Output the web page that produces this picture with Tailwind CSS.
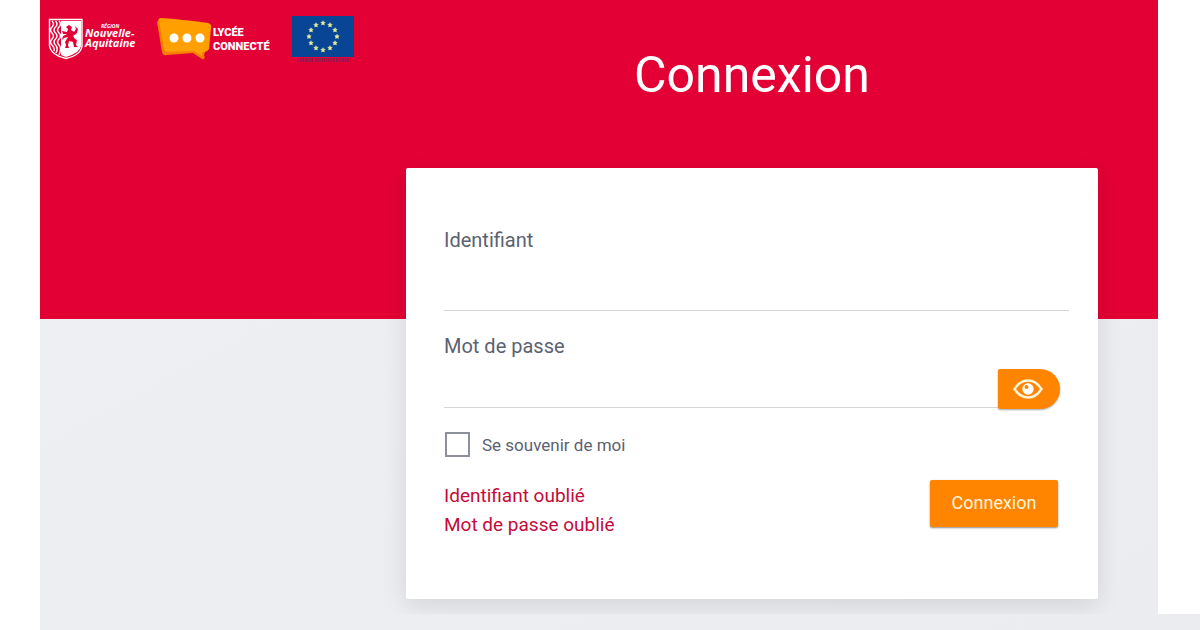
<!DOCTYPE html>
<html lang="fr">
<head>
<meta charset="utf-8">
<meta name="viewport" content="width=device-width, initial-scale=1">
<title>Connexion</title>
<script src="https://cdn.jsdelivr.net/npm/@tailwindcss/browser@4"></script>
</head>
<body class="flex min-h-screen flex-col bg-white pl-10 font-['Roboto',sans-serif] text-[#5b6270]">
  <div class="flex flex-1 flex-col bg-linear-to-br from-[#eef0f1] via-[#edeef2] to-[#ebecf0]">
    <div class="flex">
      <div class="flex flex-1 overflow-hidden bg-[linear-gradient(#e30035_319px,transparent_319px)] pr-15 pb-[15px]">
        <header class="flex w-[366px] shrink-0 items-start pt-[15px] pl-2">
          <svg class="mt-[2px] h-11 w-[90px]" viewBox="0 0 90 44" role="img" aria-label="Région Nouvelle-Aquitaine">
            <path d="M1.5 2.5H34V29Q33 38 18 41.500Q3 38 1.500 29Z" fill="#e30035" stroke="#fff" stroke-width="1.400"/>
            <path d="M13 4H33V29Q32 36 18 40Q15 39 13 38Z" fill="#fff"/>
            <path d="M4 4Q7 7 4 10T4 16T4 22T4 28T6 34M7.500 4Q10.500 7 7.500 10T7.500 16T7.500 22T7.500 28T8 36M11 4Q14 7 11 10T11 16T11 22T11 28T11 38" fill="none" stroke="#fff" stroke-width="1.500"/>
            <path d="M18 10L21 8L24 10L23 13L26 15L28 12L27 9L30 12L29 16L25 19L27 22L29 23L28 28L30 30H26L25 25L21 24L20 28L21 31H17L18 28L17 25L20 20L16 21L14 23L15 19L19 17L15 17L14 14L19 15L20 12Z" fill="#e30035"/>
            <g fill="#fff" font-family="Open Sans, sans-serif" font-weight="700" font-style="italic">
              <text x="53" y="11" font-size="5">RÉGION</text>
              <text x="37" y="20" font-size="11">Nouvelle-</text>
              <text x="37" y="30" font-size="11">Aquitaine</text>
            </g>
          </svg>
          <svg class="ml-[18px] h-12 w-[120px]" viewBox="0 0 120 48" role="img" aria-label="Lycée connecté">
            <path d="M5 3Q32 5 52 8Q56 9 55 13L53 34Q52 36 49 37L47 38L48 44L37 37L10 39Q7 39 7 36L2 7Q2 3 5 3Z" fill="#ffa000"/>
            <path d="M1 7L6 37Q7 41 11 40L37 38L46 44Q50 45 48 40L49 37L46 37L46 41L38 36L12 37Q9 37 8 34L3 5Z" fill="#f77f00"/>
            <g fill="#fff"><circle cx="18" cy="23" r="4.500"/><circle cx="31" cy="23" r="4.500"/><circle cx="44" cy="23" r="4.500"/></g>
            <g fill="#fff" font-family="Roboto, sans-serif" font-weight="900" font-size="11">
              <text x="57" y="21">LYCÉE</text>
              <text x="57" y="35">CONNECTÉ</text>
            </g>
          </svg>
          <svg class="ml-4 h-[50px] w-[62px]" viewBox="0 0 62 50" role="img" aria-label="Union européenne">
            <path d="M0 1H62V42H0Z" fill="#084595"/>
            <defs><path id="star" d="M0-2.300L.7-.8L2.200-.7L1.100.4L1.400 2L0 1.200L-1.400 2L-1.100.4L-2.200-.7L-.7-.8Z"/></defs>
            <g fill="#e9ee9a" stroke="#e9ee9a" stroke-width=".5">
              <use href="#star" x="31" y="8"/><use href="#star" x="38" y="10"/><use href="#star" x="43" y="15"/>
              <use href="#star" x="45" y="21.500"/><use href="#star" x="43" y="28"/><use href="#star" x="38" y="33"/>
              <use href="#star" x="31" y="35"/><use href="#star" x="24" y="33"/><use href="#star" x="19" y="28"/>
              <use href="#star" x="17" y="21.500"/><use href="#star" x="19" y="15"/><use href="#star" x="24" y="10"/>
            </g>
            <text x="31" y="47" text-anchor="middle" font-family="Liberation Sans, sans-serif" font-weight="700" font-size="5" fill="#7b235c">UNION EUROPEENNE</text>
          </svg>
        </header>
        <main class="min-w-0 flex-1">
          <h1 class="pt-[45px] text-center text-[50px] leading-[61px] text-white">Connexion</h1>
          <form class="mt-[62px] rounded-xs bg-white pt-[60px] pr-[29px] pb-[60px] pl-[38px] shadow-[0_6px_24px_rgba(0,0,0,0.11)]">
            <label for="login" class="block text-xl leading-6">Identifiant</label>
            <input id="login" type="text" autocomplete="username" class="mt-4 block h-[43px] w-full border-b border-[#d6d6d6] text-xl outline-none">
            <label for="password" class="mt-[23px] block text-xl leading-6">Mot de passe</label>
            <div class="mt-[11px] mr-[9px] flex">
              <input id="password" type="password" autocomplete="current-password" class="h-[39px] min-w-0 flex-1 border-b border-[#d6d6d6] text-xl outline-none">
              <button type="button" aria-label="Afficher le mot de passe" class="flex h-10 w-[62px] items-center justify-center rounded-l-xs rounded-r-[20px] bg-[#ff8500] pr-[2px] shadow-[0_1px_2px_rgba(0,0,0,0.35)]">
                <svg class="h-5 w-[30px]" viewBox="0 0 30 20" fill="none">
                  <path d="M1.500 10Q7 1.500 15 1.500T28.500 10Q23 18.500 15 18.500T1.500 10Z" stroke="#fff3dc" stroke-width="2.400"/>
                  <circle cx="15" cy="10" r="5.700" fill="#fff"/>
                  <circle cx="13.500" cy="8" r="2" fill="#ff8500"/>
                </svg>
              </button>
            </div>
            <div class="mt-[23px] flex items-center gap-3 pl-px">
              <input id="remember" type="checkbox" class="size-[25px] appearance-none border-2 border-[#8b909c] bg-white checked:bg-[#ff8500]">
              <label for="remember" class="text-[17px] leading-6">Se souvenir de moi</label>
            </div>
            <div class="mt-[23px] mr-[11px] flex items-start justify-between">
              <div class="flex flex-col pt-px text-[19px] leading-[29px] text-[#c50a39]">
                <a href="#identifiant">Identifiant oublié</a>
                <a href="#mot-de-passe">Mot de passe oublié</a>
              </div>
              <button type="submit" class="h-[47px] w-32 rounded-xs bg-[#ff8500] pb-px text-lg text-[#fff3dc] shadow-[0_1px_2px_rgba(0,0,0,0.45)]">Connexion</button>
            </div>
          </form>
        </main>
      </div>
      <div class="w-[42px] bg-white"></div>
    </div>
  </div>
</body>
</html>
